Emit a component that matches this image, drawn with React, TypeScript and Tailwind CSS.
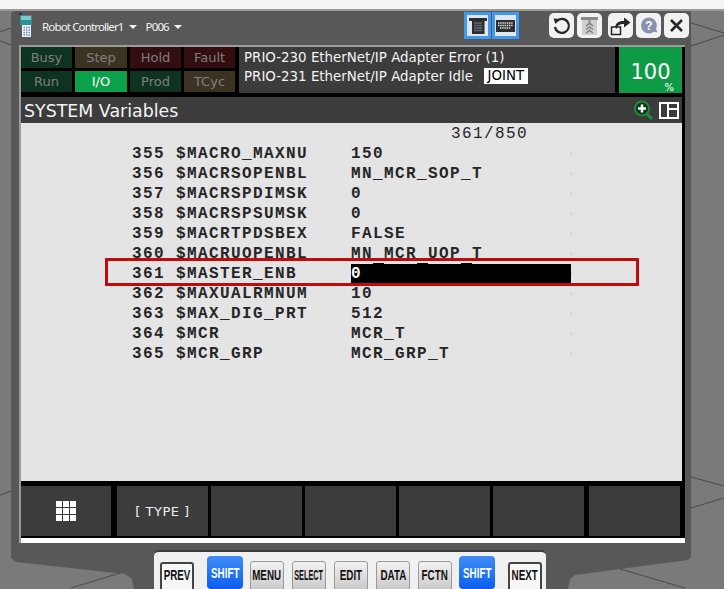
import React from "react";

const statusCells = [
  { label: "Busy", cls: "bg-[#0e3321] text-[#7f7f7f]" },
  { label: "Step", cls: "bg-[#3a3322] text-[#7f7f7f]" },
  { label: "Hold", cls: "bg-[#330d0f] text-[#7f7f7f]" },
  { label: "Fault", cls: "bg-[#330d0f] text-[#7f7f7f]" },
  { label: "Run", cls: "bg-[#0e3321] text-[#7f7f7f]" },
  { label: "I/O", cls: "bg-[#0ba04a] text-white" },
  { label: "Prod", cls: "bg-[#0e3321] text-[#7f7f7f]" },
  { label: "TCyc", cls: "bg-[#3a3322] text-[#7f7f7f]" },
];

const rows = [
  ["355", "$MACRO_MAXNU", "150"],
  ["356", "$MACRSOPENBL", "MN_MCR_SOP_T"],
  ["357", "$MACRSPDIMSK", "0"],
  ["358", "$MACRSPSUMSK", "0"],
  ["359", "$MACRTPDSBEX", "FALSE"],
  ["360", "$MACRUOPENBL", "MN_MCR_UOP_T"],
  ["361", "$MASTER_ENB", "0"],
  ["362", "$MAXUALRMNUM", "10"],
  ["363", "$MAX_DIG_PRT", "512"],
  ["364", "$MCR", "MCR_T"],
  ["365", "$MCR_GRP", "MCR_GRP_T"],
];

function Backdrop() {
  return (
    <svg className="absolute inset-0" width="724" height="589" viewBox="0 0 724 589">
      <polygon
        points="11,550 11,558 16,562 125,574 132,579 134,589 568,589 570,579 575,575 688,560 691,557 691,550"
        fill="#585858"
      />
      <g stroke="#4a4a4a" strokeWidth="1" fill="none">
        <path d="M0 32 L11 28 M0 41 L11 45 M691 23 L724 33 M691 46 L724 35" />
        <path d="M0 495 L11 491 M71 588 L120 573 M691 477 L724 486 M691 508 L724 498 M620 569 L685 588" />
      </g>
    </svg>
  );
}

function PendantLogo() {
  return (
    <svg width="16" height="26" viewBox="0 0 16 26">
      <circle cx="2.5" cy="2" r="1.6" fill="#333" />
      <circle cx="13" cy="2" r="1.6" fill="#c0262c" />
      <rect x="2" y="3" width="12" height="10" fill="#2f8f96" />
      <rect x="3" y="4" width="10" height="4" fill="#7fc7c9" />
      <rect x="4" y="13" width="9" height="12" fill="#f4f4f4" />
      <path d="M5.5 15.5H12M5.5 18H12M5.5 20.5H12M5.5 23H12" stroke="#5b8fc9" strokeWidth="1.4" strokeDasharray="1.5 1" />
    </svg>
  );
}

function ToggleButton({ children }: { children: React.ReactNode }) {
  return (
    <div className="w-[27px] h-[27px] border-[3px] border-[#3f98f2] bg-[#dfe6ee] flex items-center justify-center">
      {children}
    </div>
  );
}

function ToolButton({ children, className }: { children: React.ReactNode; className?: string }) {
  return (
    <div className={`w-[25px] h-[25px] rounded-[5px] bg-[#f2f2f2] flex items-center justify-center ${className ?? ""}`}>
      {children}
    </div>
  );
}

function Header() {
  return (
    <div className="h-[34px] flex items-start pl-[7px] relative">
      <div className="mt-[1px] w-[18px]">
        <PendantLogo />
      </div>
      <div className="mt-[9px] ml-[6px] flex items-center text-[#f2f2f2] text-[11.5px] h-[14px] font-['Noto_Sans',sans-serif] tracking-[-0.85px]">
        <span>Robot Controller1</span>
        <span className="ml-[5px] w-0 h-0 border-x-[4px] border-x-transparent border-t-[4px] border-t-[#f2f2f2]" />
        <span className="ml-[9px]">P006</span>
        <span className="ml-[5px] w-0 h-0 border-x-[4px] border-x-transparent border-t-[4px] border-t-[#f2f2f2]" />
      </div>
      <div className="ml-auto mr-[2px] flex mt-[1px]">
        <div className="flex gap-[1px] mr-[30px]">
          <ToggleButton>
            <svg width="18" height="18" viewBox="0 0 18 18">
              <path d="M0 1H18V4H15.5V17H3V4H0Z" fill="#2d2d2d" />
              <path d="M5.5 6H13M5.5 8.5H13M5.5 11H13M5.5 13.5H13" stroke="#8c9fc4" strokeWidth="1.3" strokeDasharray="1 1" />
            </svg>
          </ToggleButton>
          <ToggleButton>
            <svg width="19" height="12" viewBox="0 0 19 12">
              <rect width="19" height="12" fill="#2d2d2d" />
              <path d="M2 3H17M2 5.5H17M4 8H15" stroke="#e8e8e8" strokeWidth="1.3" strokeDasharray="1.4 0.8" />
            </svg>
          </ToggleButton>
        </div>
        <div className="flex mt-[1px]">
          <ToolButton className="mr-[3px]">
            <svg width="19" height="19" viewBox="0 0 19 19" fill="none">
              <path d="M4.5 5.5A7 7 0 1 1 3 11" stroke="#262626" strokeWidth="2.2" />
              <path d="M1.5 2.5L8 3L3.5 8Z" fill="#262626" />
            </svg>
          </ToolButton>
          <ToolButton className="mr-[6px] bg-[#e2e2e2]">
            <svg width="19" height="21" viewBox="0 0 19 21" fill="none">
              <rect x="2" y="4" width="15" height="16" fill="#cfcfcf" />
              <rect x="1" y="2" width="17" height="3" fill="#8a8a8a" />
              <rect x="8.5" y="2" width="2" height="7" fill="#8a8a8a" />
              <path d="M6 11L9.5 8.5L13 11M6 14.5L9.5 12L13 14.5M6 18L9.5 15.5L13 18" stroke="#7d7d7d" strokeWidth="1.5" />
            </svg>
          </ToolButton>
          <ToolButton className="mr-[3px]">
            <svg width="21" height="20" viewBox="0 0 21 20" fill="none">
              <rect x="1.5" y="11" width="9" height="7.5" stroke="#262626" strokeWidth="1.5" />
              <path d="M5 11C6 6.5 9 5 14 5V1.5L20.5 6.5L14 11.5V8C10 8 7.5 9 6.5 13Z" fill="#262626" />
            </svg>
          </ToolButton>
          <ToolButton className="mr-[3px]">
            <svg width="20" height="20" viewBox="0 0 20 20">
              <path d="M10 1.5A8 8 0 1 1 10 17.5A8 8 0 0 1 5 15.7L1.5 16.5L3 13A8 8 0 0 1 10 1.5Z" transform="matrix(-1 0 0 1 20 0)" fill="#8793ad" />
              <text x="10" y="14" textAnchor="middle" fill="#fff" fontSize="12" fontWeight="700" fontFamily="Liberation Sans, sans-serif">?</text>
            </svg>
          </ToolButton>
          <ToolButton>
            <svg width="15" height="15" viewBox="0 0 15 15">
              <path d="M2 2L13 13M13 2L2 13" stroke="#262626" strokeWidth="2.6" />
            </svg>
          </ToolButton>
        </div>
      </div>
    </div>
  );
}

function StatusBar() {
  return (
    <div className="flex h-[46px] font-['DejaVu_Sans',sans-serif] text-[13px]">
      <div className="grid grid-cols-[51px_52px_51px_51px] grid-rows-[21px_21px] gap-[3px]">
        {statusCells.map((c) => (
          <div key={c.label} className={`flex items-center justify-center ${c.cls}`}>
            {c.label}
          </div>
        ))}
      </div>
      <div className="ml-[4px] w-[376px] bg-[#3c3c3c] text-[#f4f4f4] pl-[5px] pt-[1px] text-[13.4px]">
        <div className="h-[19px] leading-[19px]">PRIO-230 EtherNet/IP Adapter Error (1)</div>
        <div className="h-[19px] leading-[19px] flex">
          <span>PRIO-231 EtherNet/IP Adapter Idle</span>
          <span className="ml-[11px] mt-[1px] h-[16px] leading-[16px] w-[44px] bg-white text-black text-center">JOINT</span>
        </div>
      </div>
      <div className="ml-[4px] w-[63px] bg-[#0f9b45] text-white relative flex justify-center">
        <span className="text-[21px] leading-[22px] mt-[14px] h-[22px]">100</span>
        <span className="absolute right-[8px] bottom-[0px] text-[10px] leading-[10px]">%</span>
      </div>
    </div>
  );
}

function TitleBar() {
  return (
    <div className="mt-[4px] h-[26px] bg-[#3c3c3c] flex items-center pl-[3px] pr-[3px]">
      <span className="text-[#f4f4f4] text-[17.4px] pt-[3px] font-['DejaVu_Sans',sans-serif]">SYSTEM Variables</span>
      <svg className="ml-auto" width="21" height="20" viewBox="0 0 21 20" fill="none">
        <circle cx="9" cy="8.5" r="7" fill="#12371f" stroke="#1f8a3a" strokeWidth="2" />
        <path d="M9 4.5V12.5M5 8.5H13" stroke="#fff" strokeWidth="2.4" />
        <path d="M14 14L19 19" stroke="#1f8a3a" strokeWidth="3" />
      </svg>
      <div className="ml-[5px] w-[20px] h-[17px] border-2 border-white grid grid-cols-2">
        <div className="border-r-2 border-white" />
        <div className="border-b-2 border-white h-[6px]" />
      </div>
    </div>
  );
}

function VariableList() {
  return (
    <div className="h-[358px] bg-[#e4e4e4] text-[#262626] font-['Liberation_Mono',monospace] text-[16px] tracking-[1.4px] leading-[20px] pt-[1px]">
      <div className="ml-[430px] h-[20px]">361/850</div>
      {rows.map(([num, name, value]) => {
        const selected = num === "361";
        return (
          <div key={num} className="flex h-[20px] pl-[111px] font-bold">
            <span className="w-[44px]">{num}</span>
            <span className="w-[175px]">{name}</span>
            <span className={`w-[220px] relative ${selected ? "bg-black text-white" : ""}`}>
              {value}
              {selected && (
                <>
                  <i className="absolute -top-px left-[22px] w-[11px] h-px bg-black" />
                  <i className="absolute -top-px left-[66px] w-[11px] h-px bg-black" />
                  <i className="absolute -top-px left-[110px] w-[11px] h-px bg-black" />
                </>
              )}
            </span>
            <i className="w-px h-[3px] mt-[8px] bg-[#a8d8dc]" />
          </div>
        );
      })}
    </div>
  );
}

function SoftKeys() {
  const blanks = ["w-[91px] ml-[3px]", "w-[91px] ml-[3px]", "w-[91px] ml-[3px]", "w-[91px] ml-[3px]", "w-[91px] ml-[5px]"];
  return (
    <div className="h-[57px] pt-[5px] pb-[2px] flex">
      <div className="w-[90px] bg-[#3c3c3c] grid grid-cols-[6px_6px_6px] grid-rows-[6px_6px_6px] gap-[1px] content-center justify-center">
        {Array.from({ length: 9 }).map((_, i) => (
          <div key={i} className="bg-white" />
        ))}
      </div>
      <div className="w-[91px] ml-[6px] pt-[1px] bg-[#3c3c3c] text-[#f0f0f0] text-[13px] tracking-[0.5px] font-['DejaVu_Sans',sans-serif] flex items-center justify-center">
        [ TYPE ]
      </div>
      {blanks.map((cls, i) => (
        <div key={i} className={`bg-[#3c3c3c] ${cls}`} />
      ))}
    </div>
  );
}

function Key({ label, kind, className, labelClass }: { label: string; kind: "nav" | "shift" | "plain"; className?: string; labelClass?: string }) {
  const look =
    kind === "nav"
      ? "w-[34px] mt-[10px] pt-[4px] border-2 border-[#444] bg-[#f7f7f7] text-[#111] rounded-[3px]"
      : kind === "shift"
        ? "w-[36px] mt-[4px] pt-[10px] bg-gradient-to-b from-[#3f8cf5] to-[#0a5cf0] text-white rounded-[4px]"
        : "w-[34px] mt-[9px] pt-[6px] border border-[#9a9a9a] bg-gradient-to-b from-[#f2f2f2] to-[#c4c4c4] text-[#111] rounded-[3px]";
  return (
    <div className={`h-[33px] shrink-0 flex justify-center font-bold font-['Liberation_Sans',sans-serif] text-[14px] leading-[14px] ${look} ${className ?? ""}`}>
      <span className={`shrink-0 whitespace-nowrap h-[14px] ${labelClass ?? "scale-x-[0.7]"}`}>{label}</span>
    </div>
  );
}

function KeyPanel() {
  return (
    <div className="relative -mt-[8px] ml-[154px] w-[392px] h-[39px] flex overflow-hidden rounded-t-[5px] border-t-2 border-[#3c3c3c] bg-[#f0f0f0] pl-[6px]">
      <Key label="PREV" kind="nav" />
      <Key label="SHIFT" kind="shift" className="ml-[13px]" />
      <Key label="MENU" kind="plain" className="ml-[7px]" />
      <Key label="SELECT" kind="plain" className="ml-[8px]" labelClass="scale-x-[0.52]" />
      <Key label="EDIT" kind="plain" className="ml-[8px]" />
      <Key label="DATA" kind="plain" className="ml-[8px]" />
      <Key label="FCTN" kind="plain" className="ml-[8px]" />
      <Key label="SHIFT" kind="shift" className="ml-[7px]" />
      <Key label="NEXT" kind="nav" className="ml-[13px]" />
    </div>
  );
}

export default function App() {
  return (
    <div className="relative w-[724px] h-[589px] overflow-hidden bg-[#7a7a7a]">
      <div className="relative h-[11px] bg-[#f5f5f5] border-b-2 border-[#9a9a9a]" />
      <Backdrop />
      <div className="relative ml-[11px] w-[680px] h-[547px] bg-[#585858] rounded-tl-[4px]">
        <Header />
        <div className="ml-[8px] w-[666px] border-t-2 border-l-2 border-[#9c9c9c] bg-black">
          <div className="pr-[3px]">
            <StatusBar />
            <TitleBar />
            <VariableList />
            <SoftKeys />
          </div>
          <div className="h-[5px] bg-white" />
        </div>
      </div>
      <KeyPanel />
      <div className="absolute left-[105px] top-[258px] w-[534px] h-[28px] border-[3px] border-[#c30a0a]" />
    </div>
  );
}
